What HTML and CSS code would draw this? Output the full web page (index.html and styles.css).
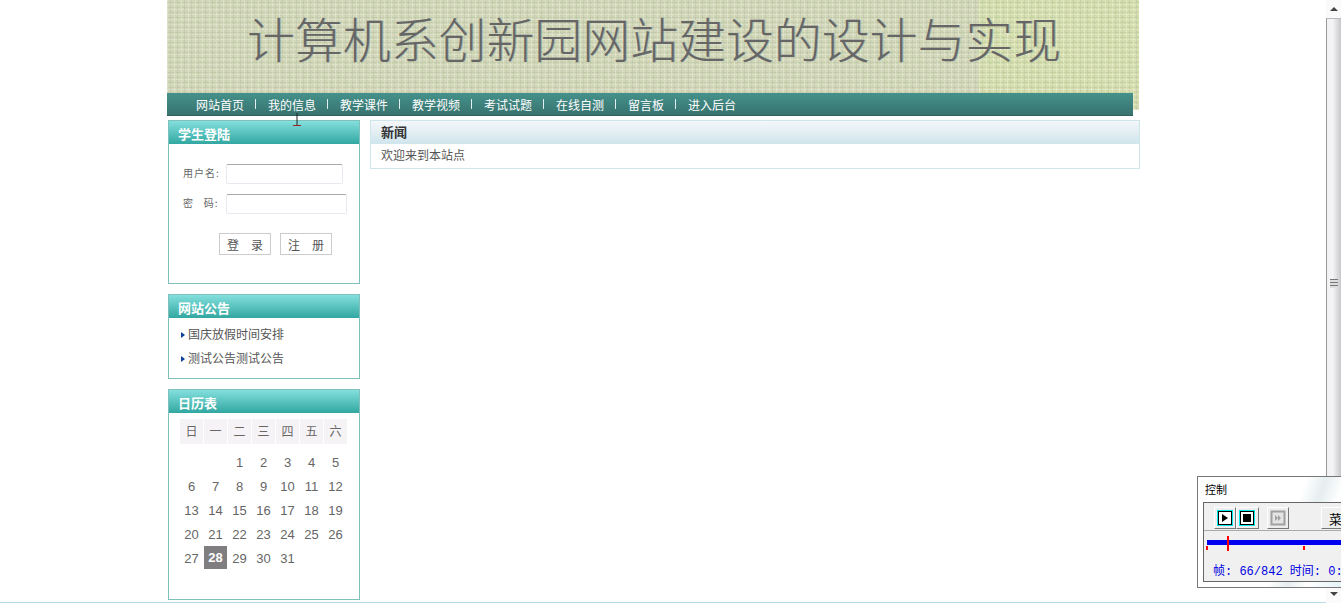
FILE: index.html
```html
<!DOCTYPE html>
<html lang="zh-CN">
<head>
    <meta charset="UTF-8">
    <title>计算机系创新园网站建设的设计与实现</title>
    <link rel="stylesheet" href="styles.css">
</head>
<body>
    <div class="page">
        <header class="banner">
            <h1>计算机系创新园网站建设的设计与实现</h1>
            <ul class="nav">
                <li><a href="#">网站首页</a></li>
                <li><a href="#">我的信息</a></li>
                <li><a href="#">教学课件</a></li>
                <li><a href="#">教学视频</a></li>
                <li><a href="#">考试试题</a></li>
                <li><a href="#">在线自测</a></li>
                <li><a href="#">留言板</a></li>
                <li><a href="#">进入后台</a></li>
            </ul>
            <svg class="cursor" width="8" height="14" viewBox="0 0 8 14">
                <path d="M4 0V12" stroke="#222" fill="none"/>
                <path d="M0 12.5H8" stroke="#a02020" fill="none"/>
            </svg>
        </header>

        <div class="columns">
            <aside class="sidebar">
                <section class="box login">
                    <h2>学生登陆</h2>
                    <form class="login-form">
                        <div class="field">
                            <label>用户名:</label>
                            <input type="text" class="input-name">
                        </div>
                        <div class="field">
                            <label>密&nbsp;&nbsp;&nbsp;码:</label>
                            <input type="password" class="input-pass">
                        </div>
                        <div class="login-buttons">
                            <button type="button">登　录</button>
                            <button type="button">注　册</button>
                        </div>
                    </form>
                </section>

                <section class="box notices">
                    <h2>网站公告</h2>
                    <ul class="notice-list">
                        <li>国庆放假时间安排</li>
                        <li>测试公告测试公告</li>
                    </ul>
                </section>

                <section class="box calendar">
                    <h2>日历表</h2>
                    <div class="cal-grid">
                        <span class="cal-head">日</span><span class="cal-head">一</span><span class="cal-head">二</span><span class="cal-head">三</span><span class="cal-head">四</span><span class="cal-head">五</span><span class="cal-head">六</span>
                        <span></span><span></span><span>1</span><span>2</span><span>3</span><span>4</span><span>5</span>
                        <span>6</span><span>7</span><span>8</span><span>9</span><span>10</span><span>11</span><span>12</span>
                        <span>13</span><span>14</span><span>15</span><span>16</span><span>17</span><span>18</span><span>19</span>
                        <span>20</span><span>21</span><span>22</span><span>23</span><span>24</span><span>25</span><span>26</span>
                        <span>27</span><span class="today">28</span><span>29</span><span>30</span><span>31</span>
                    </div>
                </section>
            </aside>

            <main class="news">
                <h2>新闻</h2>
                <p>欢迎来到本站点</p>
            </main>
        </div>
    </div>

    <div class="scrollbar">
        <div class="arrow-up"></div>
        <div class="thumb"><div class="grip"></div></div>
        <div class="arrow-down"></div>
    </div>

    <div class="player">
        <div class="player-title">控制</div>
        <div class="player-body">
            <div class="player-tools">
                <span class="tool"><svg width="16" height="16" viewBox="0 0 16 16"><rect width="16" height="16" fill="#00e8f0"/><rect x="1.5" y="1.5" width="13" height="13" fill="#fff" stroke="#000"/><path d="M5 4L11 8L5 12Z" fill="#000"/></svg></span>
                <span class="tool"><svg width="16" height="16" viewBox="0 0 16 16"><rect width="16" height="16" fill="#00e8f0"/><rect x="1.5" y="1.5" width="13" height="13" fill="#fff" stroke="#000"/><rect x="4" y="4" width="8" height="8" fill="#000"/></svg></span>
                <span class="tool disabled"><svg width="16" height="16" viewBox="0 0 16 16"><rect x="1.5" y="1.5" width="13" height="13" fill="#e4e4e4" stroke="#a0a0a0" stroke-width="2"/><path d="M5 5L8 8L5 11ZM8 5L11 8L8 11Z" fill="#a0a0a0"/></svg></span>
                <span class="tool menu">菜</span>
            </div>
            <div class="player-track">
                <div class="track-bar"></div>
                <i class="mark mark-start"></i>
                <i class="mark mark-mid"></i>
                <i class="playhead"></i>
            </div>
            <div class="player-info">帧: 66/842 时间: 0:</div>
        </div>
    </div>
</body>
</html>
```

FILE: styles.css
```css
html, body {
    margin: 0;
    padding: 0;
    height: 603px;
    overflow: hidden;
}

body {
    font-family: "Noto Sans CJK SC", "Liberation Sans", sans-serif;
    font-size: 12px;
    color: #555;
    background-color: #fff;
    border-bottom: 1px solid #b5dbe4;
    box-sizing: border-box;
}

ul {
    list-style: none;
    margin: 0;
    padding: 0;
}

.page {
    width: 973px;
    margin-left: 167px;
}

.banner {
    position: relative;
    width: 972px;
    height: 110px;
    box-sizing: border-box;
    padding-left: 80px;
    background-color: #d8dcba;
    background-image:
        linear-gradient(90deg, rgba(190, 190, 190, 0.2) 0 812px, rgba(200, 220, 130, 0.14) 812px),
        repeating-linear-gradient(90deg, rgba(255, 255, 240, 0.35) 0 1px, transparent 1px 3px, rgba(150, 160, 150, 0.2) 3px 4px, transparent 4px 7px),
        repeating-linear-gradient(0deg, rgba(255, 255, 240, 0.3) 0 1px, transparent 1px 2px, rgba(140, 170, 120, 0.22) 2px 3px, transparent 3px 5px),
        repeating-linear-gradient(45deg, rgba(185, 215, 140, 0.35) 0 1px, rgba(225, 225, 190, 0.3) 1px 3px);
}

.banner h1 {
    margin: 0;
    padding-top: 7px;
    font-size: 47.9px;
    line-height: 60px;
    font-weight: 300;
    color: #666;
    white-space: nowrap;
    text-shadow: 1px 0 0 rgba(90, 120, 140, 0.35);
}

.nav {
    position: absolute;
    left: 0;
    top: 93px;
    display: flex;
    width: 966px;
    height: 23px;
    box-sizing: border-box;
    padding-left: 29px;
    background: linear-gradient(#45918b, #38736f);
    border-bottom: 1px solid #2f625f;
}

.nav li {
    display: flex;
    align-items: center;
    line-height: 23px;
}

.nav li + li::before {
    content: "";
    width: 1px;
    height: 10px;
    margin-right: 12px;
    background-color: #dfeeee;
}

.nav a {
    padding-right: 11px;
    color: #fff;
    font-size: 12px;
    text-decoration: none;
}

.cursor {
    position: absolute;
    left: 126px;
    top: 113px;
}

.columns {
    display: flex;
    gap: 10px;
    margin: 10px 0 0 1px;
}

.sidebar {
    display: flex;
    flex-direction: column;
    gap: 10px;
    width: 192px;
}

.box {
    border: 1px solid #7fc0bb;
    box-sizing: border-box;
}

.box h2 {
    margin: 0;
    height: 23px;
    padding-left: 9px;
    font-size: 13px;
    line-height: 25px;
    font-weight: 700;
    color: #fff;
    background: linear-gradient(#83dfdd, #32a7a1);
}

.login {
    height: 164px;
}

.login-form {
    padding: 20px 0 0 14px;
}

.field {
    display: flex;
    align-items: center;
    height: 20px;
    margin-bottom: 10px;
}

.field label {
    width: 43px;
    margin-top: -4px;
    font-size: 10px;
    letter-spacing: 1px;
    color: #666;
    white-space: nowrap;
}

.field input {
    height: 20px;
    padding: 0;
    box-sizing: border-box;
    background-color: #fff;
    border: 1px solid #e8e8f0;
    border-top-color: #aaa;
    border-radius: 2px;
}

.input-name {
    width: 117px;
}

.input-pass {
    width: 121px;
}

.login-buttons {
    display: flex;
    gap: 9px;
    margin: 19px 0 0 36px;
}

.login-buttons button {
    width: 52px;
    height: 22px;
    padding: 0;
    font-family: inherit;
    font-size: 12px;
    color: #555;
    background-color: #fff;
    border: 1px solid #ccc;
}

.notices {
    height: 85px;
}

.notice-list {
    padding: 4px 0 0 12px;
}

.notice-list li {
    position: relative;
    height: 24px;
    padding-left: 7px;
    line-height: 24px;
    color: #555;
}

.notice-list li::before {
    content: "";
    position: absolute;
    left: 0;
    top: 10px;
    width: 0;
    height: 0;
    border-left: 4px solid #0a3f96;
    border-top: 3px solid transparent;
    border-bottom: 3px solid transparent;
}

.calendar {
    height: 211px;
}

.cal-grid {
    display: grid;
    grid-template-columns: repeat(7, 24px);
    grid-auto-rows: 24px;
    padding: 6px 0 0 11px;
    font-family: "Liberation Sans", sans-serif;
    font-size: 13px;
    color: #666;
}

.cal-grid span {
    display: flex;
    align-items: center;
    justify-content: center;
    margin-right: 1px;
}

.cal-grid .cal-head {
    height: 23px;
    padding-bottom: 2px;
    font-family: "Noto Sans CJK SC", sans-serif;
    font-size: 12px;
    background-color: #f6f3f6;
}

.cal-grid span:nth-child(n+8) {
    position: relative;
    top: 7px;
}

.cal-grid .today {
    color: #fff;
    font-weight: 700;
    background-color: #807e80;
    height: 23px;
}

.news {
    width: 770px;
    height: 49px;
    box-sizing: border-box;
    border: 1px solid #cfe5ec;
}

.news h2 {
    margin: 0;
    height: 23px;
    padding-left: 10px;
    font-size: 13px;
    line-height: 22px;
    font-weight: 700;
    color: #333;
    background: linear-gradient(#f4f7fa, #cfe5ec);
}

.news p {
    margin: 0;
    padding-left: 10px;
    line-height: 22px;
    color: #555;
}

.scrollbar {
    position: fixed;
    right: 0;
    top: 0;
    bottom: 0;
    width: 15px;
    display: flex;
    flex-direction: column;
    background-color: #fff;
}

.arrow-up,
.arrow-down {
    position: relative;
    height: 18px;
    background-color: #fafafa;
}

.arrow-down {
    margin-top: auto;
}

.arrow-up::after {
    content: "";
    position: absolute;
    left: 4px;
    top: 7px;
    border: 4px solid transparent;
    border-top: 0;
    border-bottom-color: #444;
}

.arrow-down::after {
    content: "";
    position: absolute;
    left: 4px;
    top: 7px;
    border: 4px solid transparent;
    border-bottom: 0;
    border-top-color: #444;
}

.thumb {
    display: flex;
    align-items: center;
    justify-content: center;
    height: 528px;
    background: linear-gradient(90deg, #f2f0f2, #f4f4f6 40%, #c8c8cc);
    border-left: 1px solid #999;
    border-top: 1px solid #bbb;
}

.grip {
    width: 8px;
    height: 9px;
    background: repeating-linear-gradient(#777 0 1px, #ddd 1px 3px);
}

.player {
    position: fixed;
    left: 1197px;
    top: 476px;
    width: 160px;
    height: 112px;
    box-sizing: border-box;
    padding: 0 5px;
    background: linear-gradient(110deg, #fff 55%, #e6eef0 65%, #fff 75%, #d8eef5);
    border: 1px solid #777;
}

.player-title {
    height: 25px;
    line-height: 25px;
    font-size: 11px;
    color: #000;
    padding-left: 2px;
}

.player-body {
    height: 80px;
    background-color: #f0f0f0;
    border: 1px solid #666;
    box-sizing: border-box;
}

.player-tools {
    display: flex;
    height: 28px;
    box-sizing: border-box;
    padding: 4px 0 0 10px;
    border-bottom: 1px solid #aaa;
}

.tool {
    display: flex;
    align-items: center;
    justify-content: center;
    width: 23px;
    height: 22px;
    box-sizing: border-box;
    background-color: #eee;
    border: 1px solid;
    border-color: #fff #777 #777 #fff;
}

.tool.disabled {
    margin-left: 8px;
}

.tool.menu {
    width: 30px;
    margin-left: 32px;
    font-size: 13px;
    color: #000;
}

.player-track {
    position: relative;
    height: 22px;
}

.track-bar {
    position: absolute;
    left: 3px;
    right: 0;
    top: 9px;
    height: 5px;
    background-color: #0000f0;
}

.mark {
    position: absolute;
    top: 15px;
    width: 2px;
    height: 4px;
    background-color: #f00;
}

.mark-start {
    left: 2px;
}

.mark-mid {
    left: 99px;
}

.playhead {
    position: absolute;
    left: 23px;
    top: 5px;
    width: 2px;
    height: 15px;
    background-color: #f00;
}

.player-info {
    padding: 8px 0 0 9px;
    font-family: "Liberation Mono", "Noto Sans CJK SC", monospace;
    font-size: 12px;
    color: #0000e0;
    white-space: nowrap;
    overflow: hidden;
}
```
